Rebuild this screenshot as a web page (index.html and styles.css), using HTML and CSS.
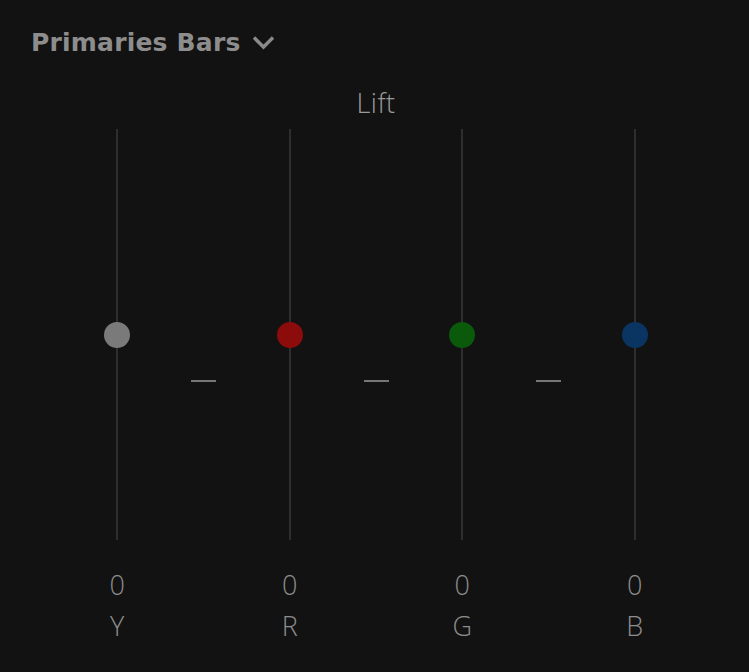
FILE: index.html
```html
<!DOCTYPE html>
<html lang="en">
<head>
  <meta charset="UTF-8" />
  <meta name="viewport" content="width=device-width, initial-scale=1.0" />
  <title>Primaries Bars</title>
  <link rel="stylesheet" href="styles.css">
</head>
<body>
  <div class="panel">
    <header class="panel-head">
      <h1>Primaries Bars</h1>
      <svg class="chevron" width="23" height="15" viewBox="0 0 23 15">
        <path d="M2 2.5 L11.5 12 L21 2.5" fill="none" stroke="#8a8a8a" stroke-width="3.4" />
      </svg>
    </header>

    <h2 class="group-title">Lift</h2>

    <div class="bars">
      <div class="slider">
        <div class="track"><span class="knob knob-y"></span></div>
        <div class="value">0</div>
        <div class="label">Y</div>
      </div>
      <div class="slider">
        <div class="track"><span class="knob knob-r"></span></div>
        <div class="value">0</div>
        <div class="label">R</div>
      </div>
      <div class="slider">
        <div class="track"><span class="knob knob-g"></span></div>
        <div class="value">0</div>
        <div class="label">G</div>
      </div>
      <div class="slider">
        <div class="track"><span class="knob knob-b"></span></div>
        <div class="value">0</div>
        <div class="label">B</div>
      </div>
    </div>
  </div>
</body>
</html>
```

FILE: styles.css
```css
:root {
  --bg: #121212;
  --text: #8d8d8d;
  --track: #2e2e2e;
}

* {
  box-sizing: border-box;
}

body {
  margin: 0;
  background: var(--bg);
  font-family: "Open Sans", "DejaVu Sans", sans-serif;
  color: var(--text);
}

.panel {
  width: 749px;
  height: 672px;
  padding: 25px 28px 0 31px;
}

.panel-head {
  display: flex;
  align-items: center;
  gap: 11px;
  height: 34px;
}

.panel-head h1 {
  margin: 0;
  font-family: "DejaVu Sans", sans-serif;
  font-size: 25px;
  font-weight: bold;
  color: var(--text);
  letter-spacing: 0.2px;
}

.chevron {
  display: block;
  margin-top: 1px;
}

.group-title {
  margin: 26px 0 0;
  text-align: center;
  font-size: 27px;
  font-weight: 300;
  line-height: 36px;
  letter-spacing: 0.5px;
  color: #9a9a9a;
}

.bars {
  display: grid;
  grid-template-columns: repeat(4, 1fr);
  margin-top: 8px;
}

.slider {
  position: relative;
  display: flex;
  flex-direction: column;
  align-items: center;
}

.slider:not(:last-child)::after {
  content: "";
  position: absolute;
  top: 251px;
  right: -12.5px;
  width: 25px;
  height: 2px;
  background: #777;
}

.track {
  position: relative;
  width: 2px;
  height: 411px;
  background: var(--track);
}

.knob {
  position: absolute;
  top: 193px;
  left: -12px;
  width: 26px;
  height: 26px;
  border-radius: 50%;
}

.knob-y { background: #7a7a7a; }
.knob-r { background: #8c0b0b; }
.knob-g { background: #0b5a0b; }
.knob-b { background: #0a3563; }

.value,
.label {
  font-size: 27px;
  font-weight: 300;
  line-height: 41px;
  color: var(--text);
}

.value {
  margin-top: 24px;
}
```
